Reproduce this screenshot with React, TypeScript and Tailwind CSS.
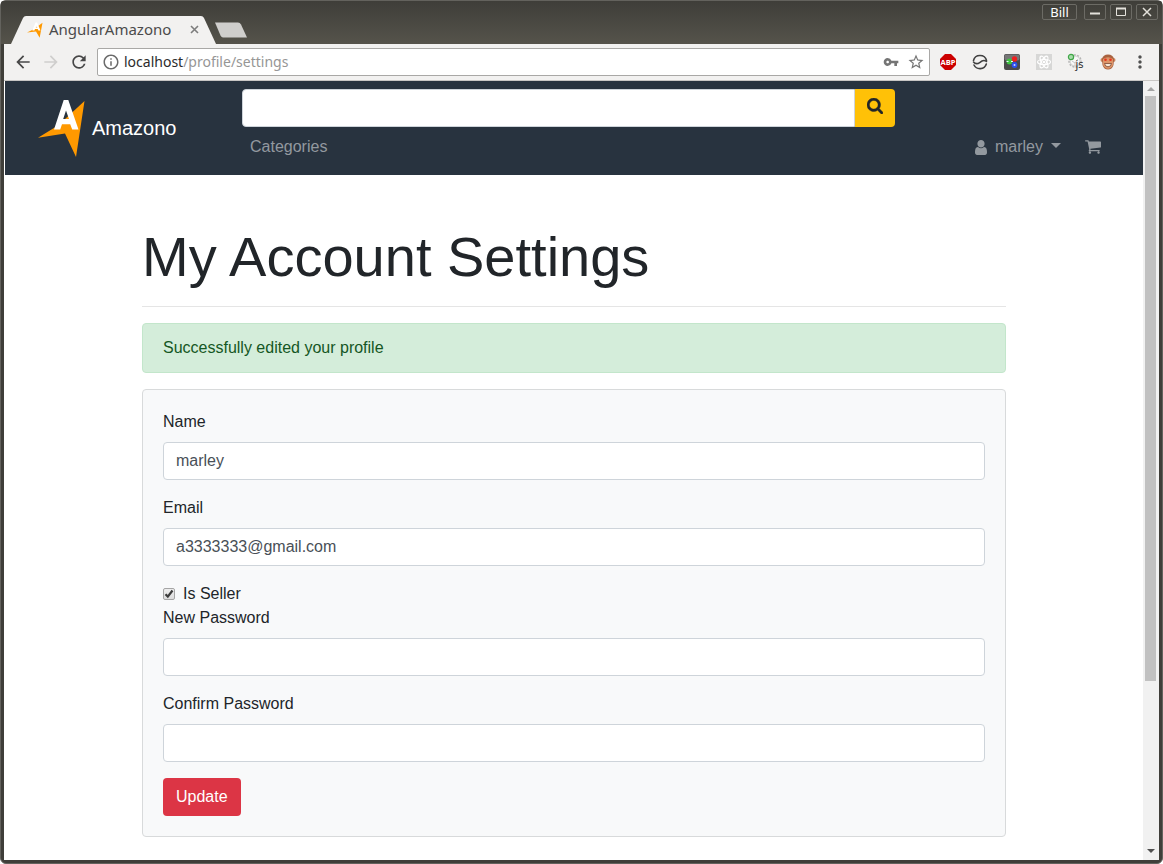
import { useState } from "react";
import type { ReactNode } from "react";
import {
  MdArrowBack,
  MdArrowForward,
  MdRefresh,
  MdInfoOutline,
  MdVpnKey,
  MdStarBorder,
  MdMoreVert,
} from "react-icons/md";

const uiFont = "font-['Noto_Sans','Open_Sans',sans-serif]";

function Logo({ className }: { className: string }) {
  return (
    <svg viewBox="0 -1 48 60" preserveAspectRatio="none" className={className} aria-hidden="true">
      <path d="M46.5 2 L38 58 L27 34.5 L0 38.7 L20 26.5 Z" fill="#ff9900" />
      <path
        d="M25.700 1 H30.3 L40.500 30.5 H34.2 L32.2 25.300 H24 L22.2 30.5 H16 Z M28 11.5 L25.2 20 H31 Z"
        fill="#fff"
        fillRule="evenodd"
      />
    </svg>
  );
}

function SearchIcon() {
  return (
    <svg viewBox="64 128 1664 1664" className="h-4 w-4" fill="currentColor" stroke="currentColor" strokeWidth="40" aria-hidden="true">
      <path d="M1216 832q0-185-131.5-316.5t-316.5-131.5-316.5 131.5-131.5 316.5 131.5 316.5 316.5 131.5 316.5-131.5 131.5-316.5zm512 832q0 52-38 90t-90 38q-54 0-90-38l-343-342q-179 124-399 124-143 0-273.5-55.5t-225-150-150-225-55.5-273.5 55.5-273.5 150-225 225-150 273.5-55.5 273.5 55.5 225 150 150 225 55.5 273.5q0 220-124 399l343 343q37 37 37 90z" />
    </svg>
  );
}

function UserIcon() {
  return (
    <svg viewBox="256 128 1280 1536" preserveAspectRatio="none" className="h-[15px] w-3" fill="currentColor" aria-hidden="true">
      <path d="M1536 1399q0 109-62.5 187t-150.5 78h-854q-88 0-150.5-78t-62.5-187q0-85 8.5-160.5t31.5-152 58.5-131 94-89 134.5-34.5q131 128 313 128t313-128q76 0 134.5 34.5t94 89 58.5 131 31.5 152 8.5 160.5zm-256-887q0 159-112.5 271.5t-271.5 112.5-271.5-112.5-112.5-271.5 112.5-271.5 271.5-112.5 271.5 112.5 112.5 271.5z" />
    </svg>
  );
}

function CartIcon() {
  return (
    <svg viewBox="64 128 1664 1664" className="h-4 w-4" fill="currentColor" aria-hidden="true">
      <path d="M704 1536q0 52-38 90t-90 38-90-38-38-90 38-90 90-38 90 38 38 90zm896 0q0 52-38 90t-90 38-90-38-38-90 38-90 90-38 90 38 38 90zm128-1088v512q0 24-16.5 42.5t-40.5 21.5l-1044 122q13 60 13 70 0 16-24 64h920q26 0 45 19t19 45-19 45-45 19h-1024q-26 0-45-19t-19-45q0-11 8-31.5t16-36 21.5-40 15.5-29.5l-177-823h-204q-26 0-45-19t-19-45 19-45 45-19h256q16 0 28.5 6.5t19.5 15.5 13 24.5 8 26 5.5 29.5 4.5 26h1201q26 0 45 19t19 45z" />
    </svg>
  );
}

function WindowButton({ label, children }: { label: string; children: ReactNode }) {
  return (
    <button
      type="button"
      aria-label={label}
      className="flex h-4 w-[22px] items-center justify-center rounded-xs border border-[#6c6b65] text-[#e4e2dc]"
    >
      <svg viewBox="0 0 12 12" className="h-3 w-3" fill="none" stroke="currentColor" aria-hidden="true">
        {children}
      </svg>
    </button>
  );
}

function TitleBar() {
  return (
    <header
      className={`flex h-[43px] justify-between rounded-t-xs bg-linear-to-b from-[#3f3e39] to-[#55534b] ${uiFont}`}
    >
      <div className="flex items-end pl-1">
        <div className="grid h-7 w-[212px]">
          <svg viewBox="0 0 212 28" preserveAspectRatio="none" className="col-start-1 row-start-1 h-7 w-full" aria-hidden="true">
            <path d="M6 28 L18 2 Q19 0 21 0 H196 Q198 0 199 2 L211 28 Z" fill="#f2f1f0" />
          </svg>
          <div className="col-start-1 row-start-1 flex items-center pr-[18px] pb-px pl-[22px]">
            <Logo className="h-4 w-4" />
            <span className="ml-[6px] flex-1 text-[15px] text-[#4b4b4b]">AngularAmazono</span>
            <button type="button" aria-label="Close tab" className="text-[#7d7d7d]">
              <svg viewBox="0 0 9 9" className="h-[9px] w-[9px]" stroke="currentColor" strokeWidth="1.6" aria-hidden="true">
                <path d="M1 1 L8 8 M8 1 L1 8" />
              </svg>
            </button>
          </div>
        </div>
        <button type="button" aria-label="New tab" className="mb-[6px] -ml-[3px]">
          <svg viewBox="0 0 34 16" className="h-4 w-[34px]" aria-hidden="true">
            <path d="M1 0.5 H24 Q26 0.5 27 2.5 L33 15.500 H9 Q7.500 15.500 6.500 13.500 Z" fill="#cfcecc" />
          </svg>
        </button>
      </div>
      <div className="flex items-start gap-1 pt-[3px] pr-1">
        <button
          type="button"
          className="mr-[3px] flex h-4 w-[35px] items-center justify-center rounded-xs border border-[#6c6b65] text-[13px] leading-none text-white"
        >
          Bill
        </button>
        <WindowButton label="Minimize">
          <path d="M1 7.500 H11" strokeWidth="2" />
        </WindowButton>
        <WindowButton label="Maximize">
          <path d="M1.500 2 V9.500 H10.500 V2" />
          <path d="M1 2.500 H11" strokeWidth="2" />
        </WindowButton>
        <WindowButton label="Close">
          <path d="M2 2 L10 10 M10 2 L2 10" strokeWidth="1.500" />
        </WindowButton>
      </div>
    </header>
  );
}

function Extensions() {
  return (
    <div className="flex items-center gap-4">
      <svg viewBox="0 0 16 16" className="h-4 w-4" role="img" aria-label="Ad blocker">
        <path d="M5 0 H11 L16 5 V11 L11 16 H5 L0 11 V5 Z" fill="#cc0000" />
        <text x="8" y="11" textAnchor="middle" fontSize="7.500" fontWeight="700" fill="#fff" fontFamily="Open Sans">
          ABP
        </text>
      </svg>
      <svg viewBox="0 0 16 16" className="h-4 w-4" fill="none" stroke="#414141" strokeWidth="1.600" strokeLinecap="round" aria-hidden="true">
        <path d="M1.500 6.500 C3 -0.200 13 -0.200 14.500 6.500" />
        <path d="M1.500 8 C4 11 6 9.800 8 8.300 C10 6.500 12 5.500 14.500 7.500" />
        <path d="M2 11 C4.500 16 12.500 16 14.300 10" />
      </svg>
      <svg viewBox="0 0 16 16" className="h-4 w-4" aria-hidden="true">
        <rect width="16" height="16" rx="2" fill="#4b4b4b" />
        <rect x="0.500" y="0.500" width="15" height="6" rx="2" fill="#777" />
        <circle cx="5.500" cy="7.500" r="2.900" fill="#3fc43f" />
        <circle cx="10.500" cy="5" r="2.700" fill="#ee2020" />
        <circle cx="10.500" cy="11" r="2.900" fill="#2b50ee" />
        <path d="M2.500 7.500 H4.500 M7 7.500 H9" stroke="#e8f4ff" strokeWidth="1.200" />
        <circle cx="10.500" cy="11" r="1" fill="#c9d4ff" />
      </svg>
      <svg viewBox="0 0 16 16" className="h-4 w-4" aria-hidden="true">
        <rect width="16" height="16" fill="#d7d7d6" />
        <g fill="none" stroke="#fff" strokeWidth="1.200">
          <ellipse cx="8" cy="8" rx="6.500" ry="2.500" />
          <ellipse cx="8" cy="8" rx="6.500" ry="2.500" transform="rotate(60 8 8)" />
          <ellipse cx="8" cy="8" rx="6.500" ry="2.500" transform="rotate(120 8 8)" />
        </g>
        <circle cx="8" cy="8" r="1.300" fill="#fff" />
      </svg>
      <svg viewBox="0 0 16 16" className="h-4 w-4" overflow="visible" aria-hidden="true">
        <circle cx="7" cy="7" r="6" fill="none" stroke="#b5b5b5" strokeWidth="1.500" strokeDasharray="2 1.300" />
        <circle cx="7" cy="7" r="5" fill="#f8f8f8" stroke="#c4c4c4" strokeWidth="0.800" />
        <path d="M4 7 L7 9 L10 5 M7 9 V12" fill="none" stroke="#c8c8c8" />
        <circle cx="3" cy="3" r="2.600" fill="#a6dba9" stroke="#3fa646" strokeWidth="1.200" />
        <text x="7.500" y="14" fontSize="11" fill="#222" fontFamily="Open Sans">
          js
        </text>
      </svg>
      <svg viewBox="0 0 16 16" className="h-4 w-4" aria-hidden="true">
        <circle cx="2.500" cy="6" r="2" fill="#c7845c" />
        <circle cx="13.500" cy="6" r="2" fill="#c7845c" />
        <path d="M2 5 Q3 0.500 8 0.500 Q13 0.500 14 5 L13.500 11 Q12 15.500 8 15.500 Q4 15.500 2.500 11 Z" fill="#a8623f" />
        <path d="M3 5 Q8 1.500 13 5 L13 11 Q11 14.800 8 14.800 Q5 14.800 3 11 Z" fill="#dd9468" />
        <circle cx="5.500" cy="5.800" r="1.300" fill="#e8331c" />
        <circle cx="10.500" cy="5.800" r="1.300" fill="#e8331c" />
        <path d="M4.500 9.500 H11.500 Q11 12.800 8 12.800 Q5 12.800 4.500 9.500 Z" fill="#f8e8d8" stroke="#7b4630" strokeWidth="0.800" />
      </svg>
      <button type="button" aria-label="Menu" className="flex w-4 justify-center text-[#505050]">
        <MdMoreVert className="h-5 w-5 shrink-0" />
      </button>
    </div>
  );
}

function Toolbar() {
  return (
    <div className={`flex h-[37px] items-center border-b border-[#c8c6c4] bg-[#f2f1f0] pr-[11px] pl-[9px] ${uiFont}`}>
      <div className="flex items-center gap-2 pr-2 text-[#474747]">
        <button type="button" aria-label="Back">
          <MdArrowBack className="h-5 w-5" />
        </button>
        <button type="button" aria-label="Forward" className="text-[#cfcecd]">
          <MdArrowForward className="h-5 w-5" />
        </button>
        <button type="button" aria-label="Reload">
          <MdRefresh className="h-5 w-5" />
        </button>
      </div>
      <div className="flex h-7 flex-1 items-center rounded-xs border border-[#a9a8a6] bg-white px-1">
        <MdInfoOutline className="h-[18px] w-[18px] text-[#6a6a6a]" />
        <p className="ml-1 flex-1 text-sm text-[#969696]">
          <span className="text-[#2b2b2b]">localhost</span>/profile/settings
        </p>
        <MdVpnKey className="h-4 w-4 text-[#757575]" />
        <MdStarBorder className="ml-2 h-[18px] w-[18px] text-[#757575]" />
      </div>
      <div className="pl-[10px]">
        <Extensions />
      </div>
    </div>
  );
}

function SiteNav() {
  return (
    <nav className="flex bg-[#28333f] py-2 pr-[34px] pl-[33px]">
      <a href="#home" className="flex w-[204px] shrink-0 items-center gap-[6px] pb-px text-xl text-white">
        <Logo className="h-[60px] w-12" />
        <span>Amazono</span>
      </a>
      <div className="flex-1">
        <form className="flex w-[653px] max-w-full" onSubmit={(e) => e.preventDefault()}>
          <input
            type="search"
            aria-label="Search"
            className="h-[38px] min-w-0 flex-1 rounded-l border border-[#ced4da] bg-white px-3 text-[#495057]"
          />
          <button
            type="submit"
            aria-label="Submit search"
            className="flex w-10 items-center justify-center rounded-r bg-[#ffc107] pb-1 text-[#212529]"
          >
            <SearchIcon />
          </button>
        </form>
        <div className="flex h-10 items-center justify-between text-[#93999f]">
          <a href="#categories" className="px-2">
            Categories
          </a>
          <div className="flex items-center">
            <button type="button" className="flex items-center px-2">
              <UserIcon />
              <span className="ml-2">marley</span>
              <span className="mb-[3px] ml-2 border-x-5 border-t-5 border-x-transparent border-t-current" />
            </button>
            <a href="#cart" aria-label="Cart" className="ml-2 px-2">
              <CartIcon />
            </a>
          </div>
        </div>
      </div>
    </nav>
  );
}

type FieldProps = { id: string; label: string; type: string; initial: string };

function Field({ id, label, type, initial }: FieldProps) {
  const [value, setValue] = useState(initial);
  return (
    <div className="mb-4">
      <label htmlFor={id} className="mb-2 block">
        {label}
      </label>
      <input
        id={id}
        type={type}
        value={value}
        onChange={(e) => setValue(e.target.value)}
        className="block h-[38px] w-full rounded border border-[#ced4da] bg-white px-3 text-[#495057]"
      />
    </div>
  );
}

function Settings() {
  const [seller, setSeller] = useState(true);
  return (
    <main className="mx-auto w-full max-w-[864px] pt-12 pb-5">
      <h1 className="text-[56px] leading-[67px]">My Account Settings</h1>
      <hr className="my-4 border-[#e5e5e5]" />
      <div role="status" className="mb-4 rounded border border-[#c3e6cb] bg-[#d4edda] px-5 py-3 text-[#155724]">
        Successfully edited your profile
      </div>
      <form
        className="rounded border border-[#d8dadb] bg-[#f8f9fa] p-5"
        onSubmit={(e) => e.preventDefault()}
      >
        <Field id="name" label="Name" type="text" initial="marley" />
        <Field id="email" label="Email" type="email" initial="a3333333@gmail.com" />
        <label className="flex items-center gap-2">
          <span className="grid h-3 w-3">
            <input
              type="checkbox"
              checked={seller}
              onChange={(e) => setSeller(e.target.checked)}
              className="col-start-1 row-start-1 h-3 w-3 appearance-none rounded-xs border border-[#a5a5a5] bg-linear-to-b from-[#eeeeee] to-[#dddddd]"
            />
            {seller && (
              <svg viewBox="0 0 12 12" className="pointer-events-none col-start-1 row-start-1 h-3 w-3" fill="none" stroke="#3c3c3c" strokeWidth="2.200" aria-hidden="true">
                <path d="M2.500 6.200 L4.800 8.600 L9.500 2.500" />
              </svg>
            )}
          </span>
          Is Seller
        </label>
        <Field id="new-password" label="New Password" type="password" initial="" />
        <Field id="confirm-password" label="Confirm Password" type="password" initial="" />
        <button type="submit" className="h-[38px] rounded bg-[#dc3545] px-[13px] text-white">
          Update
        </button>
      </form>
    </main>
  );
}

function Scrollbar() {
  return (
    <div className="flex w-4 shrink-0 flex-col items-center bg-[#f1f1f1] pr-px" aria-hidden="true">
      <div className="flex h-[15px] items-center">
        <span className="border-x-4 border-b-4 border-x-transparent border-b-[#a3a3a3]" />
      </div>
      <div className="w-[11px] flex-[585_0_0] bg-[#c1c1c1]" />
      <div className="flex-[161_0_0]" />
      <div className="flex h-[18px] items-center">
        <span className="border-x-4 border-t-4 border-x-transparent border-t-[#505050]" />
      </div>
    </div>
  );
}

export default function App() {
  return (
    <div className="flex min-h-screen flex-col rounded-md border border-[#63625d] bg-[#3f3e39]">
      <TitleBar />
      <div className="mx-[3px] mb-[3px] flex flex-1 flex-col">
        <Toolbar />
        <div className="flex flex-1 border-l border-white bg-white">
          <div className="min-w-0 flex-1 font-['Liberation_Sans',Arial,sans-serif] text-base text-[#212529]">
            <SiteNav />
            <Settings />
          </div>
          <Scrollbar />
        </div>
      </div>
    </div>
  );
}
